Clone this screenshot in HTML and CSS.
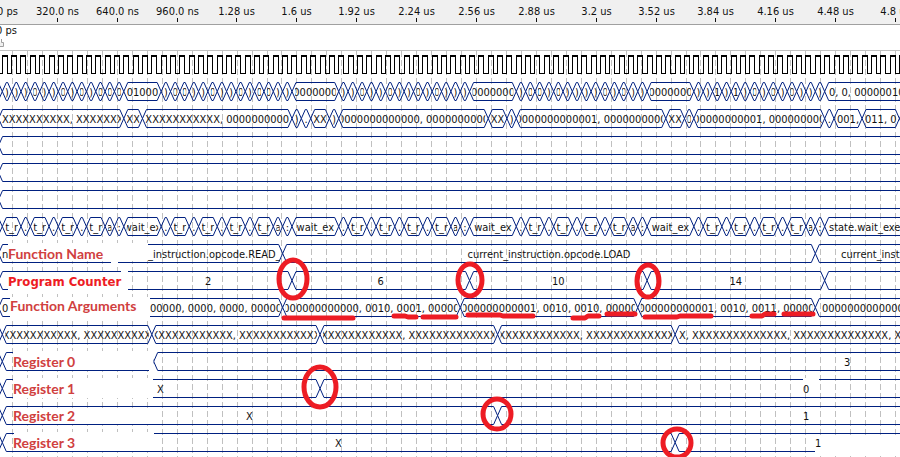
FILE: index.html
```html
<!DOCTYPE html>
<html lang="en">
<head>
<meta charset="utf-8">
<title>Waveform</title>
<link rel="stylesheet" href="styles.css">
</head>
<body>
<main class="viewer">
  <header class="ruler"><svg class="plot" id="ruler"></svg></header>
  <div class="cursor-bar"><svg class="plot" id="cursor"></svg></div>
  <section class="waves">
    <svg class="grid" id="grid"></svg>
    <div class="lanes" id="lanes"></div>
    <svg class="marks">
      <ellipse cx="293" cy="228" rx="14" ry="19"/>
      <ellipse cx="470" cy="229" rx="12" ry="16"/>
      <ellipse cx="648" cy="230" rx="11" ry="16"/>
      <ellipse cx="320" cy="336" rx="16" ry="20"/>
      <ellipse cx="497" cy="363" rx="14" ry="15"/>
      <ellipse cx="677" cy="392" rx="14" ry="14"/>
      <path d="M284 267H353M394 265H405L408 266H416M423 266H456M468 264H500L503 265H533M573 267H585L588 265H599M607 263H635M645 266H677L680 265H711M752 265H762L765 263H774M784 263H813"/>
    </svg>
  </section>
</main>
<script src="wave.js"></script>
</body>
</html>
```

FILE: styles.css
```css
body {
  margin: 0;
  overflow: hidden;
  background: #fff;
  color: #111;
  font: 11px/14px "DejaVu Sans Condensed", "DejaVu Sans", sans-serif;
}

.viewer {
  display: flex;
  flex-direction: column;
  min-height: 100vh;
}

.ruler {
  height: 24px;
  background: #f0f0f0;
  border-bottom: 1px solid #a0a0a0;
}

.cursor-bar {
  height: 25px;
  border-bottom: 1px solid #c0c0c0;
}

.plot {
  display: block;
  width: 100%;
  height: 100%;
}

.plot text {
  fill: #111;
}

.tick {
  stroke: #111;
  shape-rendering: crispEdges;
}

.handle {
  fill: #f0f0f0;
  stroke: #a0a0a0;
}

.waves {
  position: relative;
  flex: 1;
}

.grid,
.marks {
  position: absolute;
  inset: 0;
  width: 100%;
  height: 100%;
}

.grid line {
  stroke: #c0c0c0;
  stroke-dasharray: 6 3;
  shape-rendering: crispEdges;
}

.lanes {
  position: relative;
}

.lane {
  display: grid;
  height: 27px;
}

.lane > * {
  grid-area: 1 / 1;
}

.wave {
  fill: none;
  stroke: #002080;
}

.clock {
  fill: none;
  stroke: #000;
  shape-rendering: crispEdges;
}

.clock-high {
  stroke-width: 2px;
}

.blank {
  fill: #fff;
}

.label {
  margin-left: 13px;
  color: #d04040;
  font: bold 14px/27px Lato, sans-serif;
}

.label-start {
  margin-left: 8px;
}

.label-high {
  margin-left: 10px;
  line-height: 24px;
}

.label-strong {
  margin-left: 8px;
  color: #ed1c24;
  font: bold 13px/30px "DejaVu Sans Condensed", sans-serif;
}

.marks {
  fill: none;
  stroke: #ed1c24;
  stroke-width: 5px;
  stroke-linecap: round;
  stroke-linejoin: round;
}
```

FILE: wave.js
```js
const NS = "http://www.w3.org/2000/svg";
const PERIOD = 9.345;
const ORIGIN = 2.3;
const TOP = 4.5;
const BOTTOM = 22.5;
const SLOPE = 4;
const END = 400;
const edge = k => ORIGIN + k * PERIOD;

function add(parent, name, attrs, text) {
  const el = document.createElementNS(NS, name);
  for (const key in attrs) el.setAttribute(key, attrs[key]);
  if (text !== undefined) el.textContent = text;
  parent.appendChild(el);
  return el;
}

// Time ruler
const ruler = document.getElementById("ruler");
const times = ["320.0 ns", "640.0 ns", "960.0 ns", "1.28 us", "1.6 us", "1.92 us", "2.24 us",
  "2.56 us", "2.88 us", "3.2 us", "3.52 us", "3.84 us", "4.16 us", "4.48 us", "4.8 us"];
add(ruler, "text", { x: -3, y: 15 }, "0 ps");
times.forEach((t, i) => {
  const x = Math.floor(57.4 + i * 59.86) + 0.5;
  add(ruler, "text", { x, y: 15, "text-anchor": "middle" }, t);
  add(ruler, "line", { class: "tick", x1: x, x2: x, y1: 18, y2: 22 });
});

const cursor = document.getElementById("cursor");
add(cursor, "text", { x: -4, y: 9 }, "0 ps");
add(cursor, "path", { class: "handle", d: "M-1 21.5H3.5V17.5H1.5V14" });

const grid = document.getElementById("grid");
for (let i = 0; i < 200; i++) {
  const x = Math.floor(12.6 + i * 14.965) + 0.5;
  add(grid, "line", { x1: x, x2: x, y1: 0, y2: "100%" });
}

// Segments are [first edge, last edge, text, optional text start]
const steps = (from, chars) => [...chars].map((c, i) => [from + i, from + i + 1, c]);
const fetches = (from, count) => {
  const out = [];
  for (let i = 0; i < count; i++) {
    out.push([from + i * 3, from + i * 3 + 1, "."]);
    out.push([from + i * 3 + 1, from + i * 3 + 3, "t_r"]);
  }
  const end = from + count * 3;
  return out.concat([[end, end + 1, "a"], [end + 1, end + 2, ":"]]);
};
const zeros = "0000000000000";
const xs = n => "X".repeat(n);

const data = [
  { clock: true },
  { segs: [...steps(-1, "0)))0))0)0)000"), [13, 17, "01000"], ...steps(17, ")00))0))0)00))"),
    [31, 36, "0000000"], ...steps(36, "))0))0))0)0)))"), [50, 55, "0000000"],
    ...steps(55, ")00)0))))0)0))"), [69, 74, "0000000"], ...steps(74, "))1)1)0)0)0)))"),
    [88, END, "0, 0, 00000010", 829]] },
  { segs: [[-0.4, 13, xs(10) + ", " + xs(7), 2], [13, 15, "XX"],
    [15, 31, xs(11) + ", 0000000000"], [31, 32, ")"], [32, 33, "."], [33, 35, "XX"], [35, 36, ")"],
    [36, 52, zeros + ", 0000000000"], [52, 54, "XX"], [54, 55, ")"],
    [55, 71, "0000000000001, 0000000000"], [71, 73, "XX"], [73, 74, "0"],
    [74, 88, "00000000001, 000000000"], [88, 89, "."], [89, 92, "001,"],
    [92, 96, "0011, 00"], [96, END, ""]] },
  { segs: [[-0.4, END, ""]] },
  { segs: [[-0.4, END, ""]] },
  { segs: [[-0.4, END, ""]] },
  { segs: [[-1, 0, ""], [0, 2, "t_r"], ...fetches(2, 3), [13, 17, "wait_ex"],
    ...fetches(17, 4), [31, 36, "wait_ex"], ...fetches(36, 4), [50, 55, "wait_ex"],
    ...fetches(55, 4), [69, 74, "wait_ex"], ...fetches(74, 4), [88, END, "state.wait_execute", 829]] },
  { label: "Function Name", kind: "label-start",
    segs: [[-0.4, 30, "_instruction.opcode.READ_I", 148], [30, 87, "current_instruction.opcode.LOAD"],
      [87, END, "current_instruction", 841]],
    lead: "n",
    blanks: [[8, 3, 140, 18], [111, 20, 7, 4]] },
  { label: "Program Counter", kind: "label-strong",
    segs: [[-0.4, 31, "2", 205], [31, 50, "6"], [50, 69, "10"], [69, 88, "14"], [88, END, ""]],
    blanks: [[8, 5, 120, 20], [121, 3, 7, 4]] },
  { label: "Function Arguments", kind: "label-high",
    segs: [[-0.4, 30, "00000, 0000, 0000, 00000", 150], [30, 49, "000000000000, 0010, 0001, 00000"],
      [49, 68, "000000000001, 0010, 0010, 00000"], [68, 87, "000000000001, 0010, 0011, 00000"],
      [87, END, zeros + "00", 822]],
    lead: "0",
    blanks: [[10, 3, 140, 22]] },
  { segs: [[-1, 0, ""], [0, 16, xs(11) + ", " + xs(10)], [16, 34, xs(12) + ", " + xs(12)],
    [34, 53, xs(12) + ", " + xs(13)], [53, 72, xs(12) + ", " + xs(13)],
    [72, END, "X, " + xs(14) + ", " + xs(14) + ", X", 679]] },
  { label: "Register 0", segs: [[-1, 0, "X"], [0, 16.2, ""], [16.2, END, "3", 844]],
    blanks: [[13, 3, 140, 19], [149, 3, 4.4, 22]] },
  { label: "Register 1", segs: [[-1, 0, "X"], [0, 34, "X", 157], [34, END, "0", 803]],
    blanks: [[13, 3, 140, 20], [803, 3, 16, 7]] },
  { label: "Register 2", segs: [[-1, 0, "X"], [0, 53, "X", 246], [53, END, "1", 803]],
    blanks: [[13, 6, 140, 16]] },
  { label: "Register 3", segs: [[-1, 0, "X"], [0, 72, "X", 335], [72, END, "1", 815]],
    blanks: [[14, 3, 140, 19], [815, 8, 1200, 16]] }
];

function drawClock(svg) {
  let d = "M0 22.5";
  let high = "";
  for (let k = 0; k < END; k++) {
    const up = Math.floor(edge(k)) + 0.5;
    const down = Math.floor(edge(k) + 5) + 0.5;
    d += `H${up}V4.5H${down}V22.5`;
    high += `M${up - 0.5} 5H${down + 0.5}`;
  }
  add(svg, "path", { class: "clock", d });
  add(svg, "path", { class: "clock clock-high", d: high });
}

function drawBus(svg, segs) {
  let d = "";
  for (const [from, to] of segs) {
    const a = edge(from);
    const b = edge(to);
    const mid = (TOP + BOTTOM) / 2;
    d += `M${a} ${mid}L${a + SLOPE} ${TOP}H${b - SLOPE}L${b} ${mid}L${b - SLOPE} ${BOTTOM}H${a + SLOPE}Z`;
  }
  add(svg, "path", { class: "wave", d });
}

function drawText(svg, segs) {
  for (const [from, to, text, start] of segs) {
    if (!text) continue;
    const a = edge(from) + 3;
    const w = edge(to) - 3 - a;
    const box = add(svg, "svg", { x: a, y: 0, width: w, height: 27 });
    if (start === undefined) add(box, "text", { x: w / 2, y: 18, "text-anchor": "middle" }, text);
    else add(box, "text", { x: start - a, y: 18 }, text);
  }
}

const lanes = document.getElementById("lanes");
for (const lane of data) {
  const row = document.createElement("div");
  row.className = "lane";
  lanes.appendChild(row);
  const svg = add(row, "svg", { class: "plot" });
  if (lane.clock) {
    drawClock(svg);
    continue;
  }
  drawBus(svg, lane.segs);
  for (const [x, y, width, height] of lane.blanks || []) {
    add(svg, "rect", { class: "blank", x, y, width, height });
  }
  drawText(svg, lane.segs);
  if (lane.lead) add(svg, "text", { x: 2, y: 18 }, lane.lead);
  if (lane.label) {
    const label = document.createElement("span");
    label.className = "label " + (lane.kind || "");
    label.textContent = lane.label;
    row.appendChild(label);
  }
}
```
